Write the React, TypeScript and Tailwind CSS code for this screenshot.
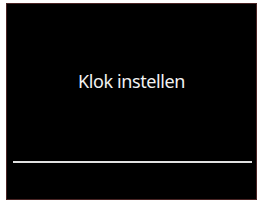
export default function App() {
  return (
    <div className="w-[257px] h-[201px] bg-white pl-[6px] pt-[3px]">
      <div className="w-[251px] h-[197px] bg-black border border-[#4a2424] flex flex-col">
        <div
          className="mt-[67px] text-center text-[18px] leading-[21px] tracking-[-0.4px] text-[#f2f2f2]"
          style={{ fontFamily: '"Noto Sans", sans-serif' }}
        >
          Klok instellen
        </div>
        <div className="mt-[69px] ml-[6px] w-[239px] h-[2px] bg-[#e0e0e0]" />
      </div>
    </div>
  );
}
